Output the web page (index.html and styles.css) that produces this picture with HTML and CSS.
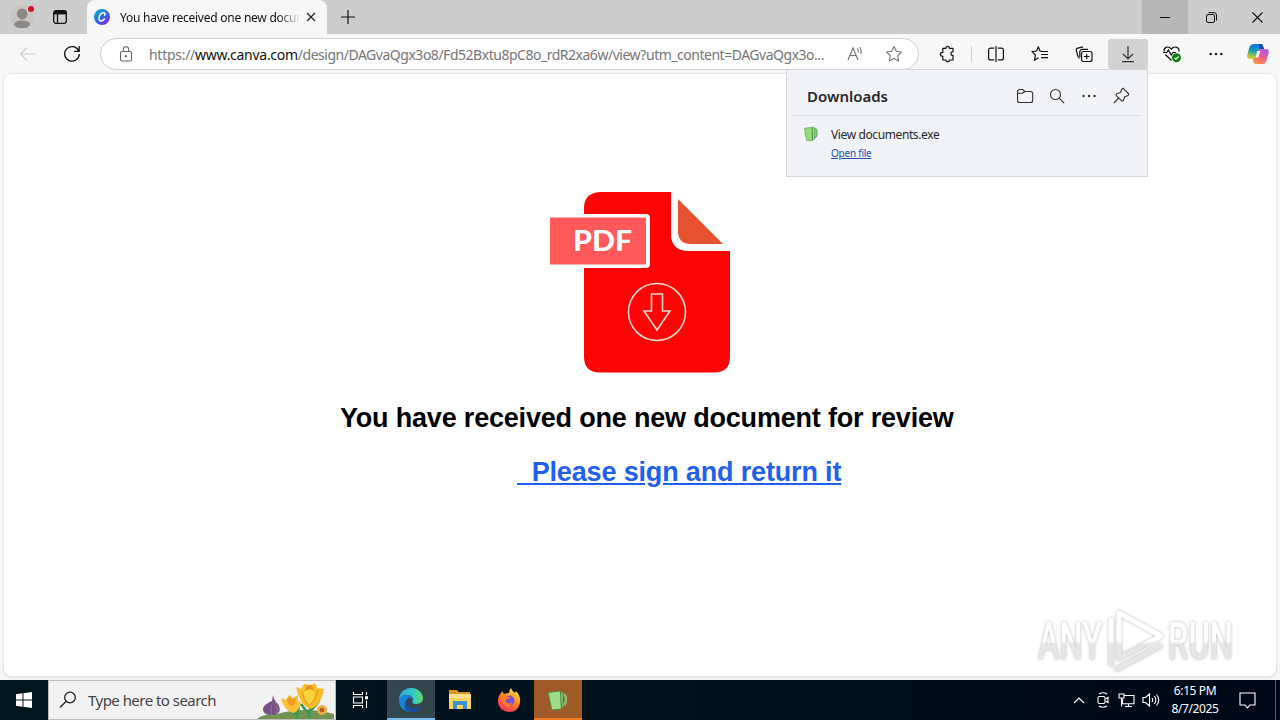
FILE: index.html
```html
<!DOCTYPE html>
<html lang="en">
<head>
<meta charset="utf-8">
<title>You have received one new document</title>
<link rel="stylesheet" href="styles.css">
</head>
<body>
<div class="desktop">
  <header class="tabstrip">
    <div class="profile"><svg width="28" height="28" viewBox="0 0 28 28"><circle cx="14" cy="14" r="12" fill="#c8c5c4"/><circle cx="14.200" cy="11" r="5.400" fill="#8c8886"/><path d="M6 22c0-3 3-4.500 8-4.500s8 1.500 8 4.500c-1.500 2.500-4.500 3-8 3s-6.500-.5-8-3z" fill="#8c8886"/><circle cx="23" cy="6" r="4.200" fill="#cfcccc"/><circle cx="23" cy="6" r="3" fill="#d3102a"/></svg></div>
    <div class="workspaces"><svg width="16" height="16" viewBox="0 0 16 16" fill="none" stroke="#111" stroke-width="1.300"><rect x="1.700" y="1.700" width="12.600" height="12.600" rx="2.200"/><path d="M2 3.700h12" stroke-width="3.400"/><path d="M5.500 5v9"/></svg></div>
    <div class="tab">
      <svg class="favicon" width="16" height="16" viewBox="0 0 16 16"><defs><linearGradient id="canva" x1="0" y1="0" x2=".75" y2="1"><stop offset="0" stop-color="#08b7c9"/><stop offset=".5" stop-color="#2877df"/><stop offset="1" stop-color="#762de1"/></linearGradient></defs><circle cx="8" cy="8" r="8" fill="url(#canva)"/><path d="M10.600 6.300c.8-1.300.2-2.500-1.100-2.500C7 3.800 5 6.600 5 9.300c0 3.600 3.300 3.500 5.500.7" fill="none" stroke="#fff" stroke-width="1.400" stroke-linecap="round"/></svg>
      <span class="tab-title">You have received one new docum</span>
      <svg class="tab-close" width="10" height="10" viewBox="0 0 10 10" stroke="#222" stroke-width="1.200"><path d="M1 1l8 8M9 1l-8 8"/></svg>
    </div>
    <svg class="new-tab" width="14" height="14" viewBox="0 0 14 14" stroke="#111" stroke-width="1.200"><path d="M7 0v14M0 7h14"/></svg>
    <div class="window-controls">
      <div class="control minimize"><svg width="10" height="10" viewBox="0 0 10 10" stroke="#111"><path d="M0 5.500h10"/></svg></div>
      <div class="control"><svg width="11" height="11" viewBox="0 0 11 11" fill="none" stroke="#111"><rect x=".5" y="2.500" width="8" height="8" rx="1.500"/><path d="M2.500 .6h5.500a2.500 2.500 0 0 1 2.500 2.500v5.400"/></svg></div>
      <div class="control"><svg width="11" height="11" viewBox="0 0 11 11" stroke="#111" stroke-width="1.100"><path d="M.5 .5l10 10M10.500 .5l-10 10"/></svg></div>
    </div>
  </header>

  <nav class="toolbar">
    <div class="nav-button"><svg width="18" height="16" viewBox="0 0 18 16" fill="none" stroke="#cfcfcf" stroke-width="1.200"><path d="M17 8H2M8 1.500L1.500 8 8 14.500"/></svg></div>
    <div class="nav-button"><svg width="18" height="18" viewBox="0 0 18 18" fill="none" stroke="#111" stroke-width="1.300"><path d="M15.800 6.200A7.300 7.300 0 1 0 16.300 9M16.200 1v5.300H11"/></svg></div>
    <div class="address">
      <svg width="14" height="16" viewBox="0 0 14 16" fill="none" stroke="#666" stroke-width="1.100"><rect x="1.500" y="5.500" width="11" height="9.500" rx="1.600"/><path d="M4.300 5.500V3.500a2.700 2.700 0 0 1 5.400 0v2"/><circle cx="7" cy="10.200" r=".6" fill="#666"/></svg>
      <span class="url"><span class="scheme">https://</span><b>www.canva.com</b><span class="path">/design/DAGvaQgx3o8/Fd52Bxtu8pC8o_rdR2xa6w/view?utm_content=DAGvaQgx3o...</span></span>
      <svg class="read-aloud" width="17" height="16" viewBox="0 0 17 16" fill="none" stroke="#707070" stroke-width="1.100"><path d="M1 14L6 2l5 12M2.800 9.500h6.400M10.300 2.400q1.500 2 .8 4.300M12.700 1q2.300 3.300 1.300 7"/></svg>
      <svg class="favorite" width="18" height="18" viewBox="0 0 18 18" fill="none" stroke="#777" stroke-width="1.100" stroke-linejoin="round"><path d="M9 1.500l2.300 4.800 5.200.7-3.800 3.700.9 5.200L9 13.400l-4.600 2.500.9-5.200L1.500 7l5.200-.7z"/></svg>
    </div>
    <div class="tool puzzle"><svg width="18" height="18" viewBox="0 0 18 18" fill="none" stroke="#111" stroke-width="1.200" stroke-linejoin="round"><path d="M5.800 3.300h2.200C7.800.8 11.600.8 11.400 3.300H15v3.500c-2.800-.5-2.800 4.100 0 3.600v4.600h-3.600c.2 2.200-3.600 2.200-3.400 0H4.800v-3.600C1.500 11.500 1.500 7.200 4.800 7.400V3.300z"/></svg></div>
    <div class="divider"></div>
    <div class="tool"><svg width="18" height="18" viewBox="0 0 18 18" fill="none" stroke="#111" stroke-width="1.200"><path d="M7.200 3.100H3.600a2 2 0 0 0-2 2v7.800a2 2 0 0 0 2 2h3.600M10.800 3.100h3.600a2 2 0 0 1 2 2v7.800a2 2 0 0 1-2 2h-3.600M9 1v16"/></svg></div>
    <div class="tool"><svg width="18" height="18" viewBox="0 0 18 18" fill="none" stroke="#111" stroke-width="1.200" stroke-linejoin="round"><path d="M12 6.500l-3-.4L7.300 1.800 5.500 6l-4.500.6L4.400 10l-.9 5.200 4-2.400M11.700 6.500H17M10 9.500h7M10 12.600h7"/></svg></div>
    <div class="tool"><svg width="18" height="18" viewBox="0 0 18 18" fill="none" stroke="#111" stroke-width="1.200"><rect x="6.500" y="6.500" width="10.500" height="10" rx="2"/><path d="M11.700 8.800v5.500M9 11.500h5.500M4.800 13.300A3 3 0 0 1 2.800 11L1.400 5.600a2 2 0 0 1 1.400-2.400L8 1.800M4.800 12V7a2.600 2.600 0 0 1 2.600-2.600H13"/></svg></div>
    <div class="tool download"><svg width="14" height="18" viewBox="0 0 14 18" fill="none" stroke="#333" stroke-width="1.200"><path d="M7 1v13M2 9l5 5 5-5M1 16.700h12"/></svg></div>
    <div class="tool"><svg width="20" height="18" viewBox="0 0 20 18" fill="none" stroke="#111" stroke-width="1.200"><path d="M2.300 6.500C1.300 2.500 6 .2 9.300 4c3.200-3.800 8.700-1.500 7.500 2.500M1.200 7.500h3.500l1.700-2.600L9.200 10l1.700-2.500h3M3.300 9.500l6.200 6"/><circle cx="14.500" cy="12.800" r="4.500" fill="#138018" stroke="none"/><path d="M12.500 13l1.400 1.300 2.700-2.800" stroke="#fff" stroke-width="1.100"/></svg></div>
    <div class="tool"><svg width="14" height="4" viewBox="0 0 14 4" fill="#222"><circle cx="1.700" cy="2" r="1.300"/><circle cx="7" cy="2" r="1.300"/><circle cx="12.300" cy="2" r="1.300"/></svg></div>
    <div class="tool copilot"><svg width="22" height="20" viewBox="0 0 22 20"><defs><linearGradient id="coolSide" x1=".5" y1="0" x2=".3" y2="1"><stop offset="0" stop-color="#126ee0"/><stop offset=".45" stop-color="#159cba"/><stop offset=".75" stop-color="#8bc255"/><stop offset="1" stop-color="#f4ce24"/></linearGradient><linearGradient id="warmSide" x1=".7" y1="0" x2=".3" y2="1"><stop offset="0" stop-color="#ac5fee"/><stop offset=".45" stop-color="#ee5694"/><stop offset="1" stop-color="#ff914c"/></linearGradient></defs><path d="M7 0h7q1.500 0 2 2l1 3h-3q-2 0-2.600 2L9 13q-1 3-3 2H3q-4 0-2.500-5l2-7Q3.400 0 7 0z" fill="url(#coolSide)"/><path d="M15 20H9q-2 0-2.500-2L6 15q2 0 2.800-2l2-6q.8-2 3-2h5q4 0 2.700 4.500l-2 7Q18.600 20 15 20z" fill="url(#warmSide)"/><path d="M10.300 7h3l-1.900 6.500h-3z" fill="#f7f7f7"/><path d="M12 0h2.500q1 .5 1.500 2l1 3h-5z" fill="#1849a8"/></svg></div>
  </nav>

  <section class="downloads">
    <div class="downloads-head">
      <h2>Downloads</h2>
      <svg class="folder" width="18" height="16" viewBox="0 0 18 16" fill="none" stroke="#333" stroke-width="1.100"><path d="M1.500 12.500v-9a2 2 0 0 1 2-2h3.200l2 2h6a2 2 0 0 1 2 2v7a2 2 0 0 1-2 2H3.500a2 2 0 0 1-2-2zM1.500 5.200h5.200l2-1.700"/></svg>
      <svg width="16" height="16" viewBox="0 0 16 16" fill="none" stroke="#333" stroke-width="1.100"><circle cx="6.500" cy="6.500" r="5"/><path d="M10.200 10.200l5 5"/></svg>
      <svg width="14" height="16" viewBox="0 0 14 16" fill="#333"><circle cx="1.500" cy="8" r="1.200"/><circle cx="7" cy="8" r="1.200"/><circle cx="12.500" cy="8" r="1.200"/></svg>
      <svg width="17" height="17" viewBox="0 0 17 17" fill="none" stroke="#333" stroke-width="1.100" stroke-linejoin="round"><path d="M10 1.200l5.800 5.800-.8 1.500-3.300 1.300-1.500 4-1.200.4L3 8.300l.4-1.300 4-1.500L9 2zM5.700 11L1 16"/></svg>
    </div>
    <div class="download-item">
      <svg width="14" height="16" viewBox="0 0 14 16"><path d="M9.500 2q4 0 3.500 4v4q-1.500 3.500-5 3" fill="#86c87d" stroke="#69a05e"/><path d="M.7 2.300l7-.8L9 .8l1.500 2v9.500L9 14.200l-6 .6L1.500 9z" fill="#91df79" stroke="#76b36a"/><path d="M8 2l.5 12" fill="none" stroke="#4f8a47"/></svg>
      <div class="file"><span class="file-name">View documents.exe</span><a class="open-file">Open file</a></div>
    </div>
  </section>

  <main class="viewport">
    <div class="page">
      <svg class="pdf" width="182" height="182" viewBox="0 0 182 182">
        <path d="M53 1h69v42q0 17 18 17h41v105.500q0 16-16 16H51q-16 0-16-16V17Q35 1 53 1z" fill="#fc0505"/>
        <path d="M129 8l45 45h-32q-13 0-13-13z" fill="#e6522e"/>
        <path d="M0 23h97q4 0 4 4v46q0 4-4 4H0z" fill="#fff"/><path d="M1 26.500h96v47H1z" fill="#ff5959"/>
        <text class="pdf-label" x="24" y="60" textLength="59" lengthAdjust="spacingAndGlyphs">PDF</text>
        <g fill="none" stroke="#ffd5cd" stroke-width="1.600"><circle cx="108" cy="121" r="28.500"/><path d="M102.500 103h11v17h7.500l-13 19-13-19h7.500z"/></g>
      </svg>
      <h1 class="heading">You have received one new document for review</h1>
      <a class="sign-link">&nbsp;&nbsp;Please sign and return it</a>
      <div class="watermark">
        <svg width="210" height="72" viewBox="0 0 210 72">
          <defs><linearGradient id="mark" gradientUnits="userSpaceOnUse" x1="0" y1="14" x2="0" y2="58"><stop offset=".5" stop-color="#fff"/><stop offset=".58" stop-color="#e6e6e6"/></linearGradient></defs>
          <g class="brand" fill="url(#mark)"><text x="4" y="54" textLength="64" lengthAdjust="spacingAndGlyphs">ANY</text><text x="134" y="54" textLength="65" lengthAdjust="spacingAndGlyphs">RUN</text></g>
          <g fill="none" stroke="url(#mark)" stroke-width="5" stroke-linejoin="round" stroke-linecap="round"><path d="M85 53V8l42 23-42 22M77 15v44M83 64l43-23"/></g>
        </svg>
      </div>
    </div>
  </main>

  <footer class="taskbar">
    <div class="start"><svg width="16" height="16" viewBox="0 0 16 16" fill="#fff"><path d="M0 2.200l6.500-.9v6.200H0zM7.500 1.200L16 0v7.500H7.500zM0 8.500h6.500v6.200L0 13.800zM7.500 8.500H16V16l-8.500-1.200z"/></svg></div>
    <div class="search">
      <svg width="18" height="18" viewBox="0 0 18 18" fill="none" stroke="#222" stroke-width="1.300"><circle cx="11" cy="6.500" r="5.300"/><path d="M7.200 10.300L1 16.500"/></svg>
      <span>Type here to search</span>
      <svg class="flowers" width="79" height="37" viewBox="0 0 79 37"><path d="M1 37q5-5 20-5 28-8 57 0v5z" fill="#719451"/><path d="M41 37q0-7 2-12M53 36q1-9 1-16M54 29q5-4 9-10M41 33q-6-3-9-7M53 31q-5-4-8-9" fill="none" stroke="#409654" stroke-width="2.500"/><path d="M17 13q1 6 5 9 5 9-4 11-12 1-11-7 2-4 9-7z" fill="#765087"/><path d="M17 20q-4 8-1 13M19 20q4 7 1 13" fill="none" stroke="#9d75aa" stroke-width=".8"/><path d="M25 16l5 2 3-5 4 3 5-3v6l3 1q-2 10-8 11-9-2-12-15z" fill="#fac233"/><path d="M31 17l3-3 2 3 4-1-1 6-3 2-4-2z" fill="#f19a20"/><path d="M40 5l5 2 3-5 7 1 4-2 2 5 7 1q-3 17-14 20-10-4-14-22z" fill="#fabb26"/><path d="M47 6l7-3 5 5-1 10-4 6-5-6z" fill="#ffd33a"/><path d="M48 9l3-5 4-1 4 6-5-2z" fill="#e98d24"/><path d="M46 9q1 8 7 15M62 8q-1 8-8 15" fill="none" stroke="#dc9417"/><circle cx="66" cy="28" r="5" fill="#f2ae46"/><circle cx="66" cy="28" r="2.300" fill="#b8572c"/></svg>
    </div>
    <div class="task view"><svg width="17" height="16" viewBox="0 0 17 16" fill="none" stroke="#fff" stroke-width="1.100"><path d="M1.500 0v2.500h9V0M1.500 5h9v6h-9zM1.500 16v-2.500h9V16M14.500 0v3M14.500 8.500V16"/><path d="M13 4.200h3v3h-3z" fill="#fff" stroke="none"/></svg></div>
    <div class="task edge"><svg width="24" height="24" viewBox="0 0 24 24"><defs><linearGradient id="edgeTop"><stop stop-color="#27a9df"/><stop offset=".6" stop-color="#35c8c4"/><stop offset="1" stop-color="#61dc63"/></linearGradient></defs><path d="M0 12C0-3 22-4 24 10q0 6-8 6-4 0-2-4 0-5-6-5-5 0-8 5z" fill="url(#edgeTop)"/><path d="M0 12q1-5 8-5 6 0 6 5-2-3-5-2-5 5 0 10 4 4 10 2-6 4-12 1Q0 20 0 12z" fill="#1685d9"/><path d="M8 11q-3 8 5 9 6 1 9-2-4 8-11 6Q2 22 8 11z" fill="#154f9c"/></svg></div>
    <div class="task"><svg width="22" height="20" viewBox="0 0 22 20"><path d="M0 0h8l1.500 2H21v5H0z" fill="#dc971c"/><path d="M0 4h22v15H0z" fill="#ffd45d"/><path d="M4 19v-8h14v8h-4v-4H8v4z" fill="#3b94d1"/><path d="M0 4h22v4H0z" fill="#ffe28b"/></svg></div>
    <div class="task"><svg width="24" height="24" viewBox="0 0 24 24"><defs><linearGradient id="flame" x1=".8" y1="0" x2=".2" y2="1"><stop stop-color="#ffe348"/><stop offset=".45" stop-color="#ff8a22"/><stop offset="1" stop-color="#f32768"/></linearGradient></defs><path d="M5 3l2 3q3-1 5-1 0-3 2-5 1 3 4 5l1-2q5 5 4 12-2 9-11 9Q1 23 1 13q0-5 3-8z" fill="url(#flame)"/><circle cx="12.500" cy="12.500" r="5" fill="#7650d8"/><path d="M4 8q4-2 7 1h3q-1 2-4 2-2 1-1 3 3 3 6 0-1 5-6 4-5-3-5-10z" fill="#ff7c22"/></svg></div>
    <div class="task running"><svg width="22" height="22" viewBox="0 0 22 22"><path d="M14 5q5 0 5 5 0 7-6 7" fill="none" stroke="#83bd72" stroke-width="2.500"/><path d="M1 3.500l12-1.500 3 2v14l-2 2-9 1L3 13z" fill="#9bdc88" stroke="#4f8b43"/><path d="M13.500 3l1 16" fill="none" stroke="#4f8b43" stroke-width="1.200"/></svg></div>
    <div class="tray">
      <svg width="12" height="8" viewBox="0 0 12 8" fill="none" stroke="#fff" stroke-width="1.200"><path d="M1 7l5-5 5 5"/></svg>
      <svg width="12" height="16" viewBox="0 0 12 16" fill="none" stroke="#fff" stroke-width="1.100"><rect x="1" y="4.500" width="7" height="7" rx="1.500"/><path d="M8.500 7l2.500-1.700v5.400L8.500 9M2 2q4-2.500 8 0M2 14q4 2.500 8 0"/></svg>
      <svg width="17" height="16" viewBox="0 0 17 16" fill="none" stroke="#fff" stroke-width="1.100"><path d="M6.500 3.500H16v8.300H4.500V7M10.500 12v2.500M7 14.500h7M1 2h5v4H1zM3.500 6v8.500"/></svg>
      <svg width="18" height="16" viewBox="0 0 18 16" fill="none" stroke="#fff" stroke-width="1.100"><path d="M1 5.500h2.500l4-3.500v12l-4-3.500H1zM10 6q1.500 2 0 4M12.300 4q3 4 0 8M14.500 2.500q4.500 5.500 0 11"/></svg>
      <div class="clock"><span class="time">6:15 PM</span><span class="date">8/7/2025</span></div>
      <svg width="17" height="17" viewBox="0 0 17 17" fill="none" stroke="#fff" stroke-width="1.100"><path d="M1 1h15v12h-5l-2.500 2.800L6 13H1z"/></svg>
      <div class="show-desktop"></div>
    </div>
  </footer>
</div>
</body>
</html>
```

FILE: styles.css
```css
* { box-sizing: border-box; }
body { margin: 0; font-family: "Noto Sans", "Open Sans", sans-serif; }
svg { display: block; flex: none; }
.desktop { position: relative; width: 1280px; height: 720px; display: flex; flex-direction: column; overflow: hidden; background: #f7f7f7; }

.tabstrip { height: 34px; flex: none; display: flex; align-items: center; background: #cdcdcd; }
.profile { width: 46px; padding: 0 0 1px 8px; }
.workspaces { width: 41px; padding-left: 6px; }
.tab { width: 240px; height: 34px; display: flex; align-items: center; padding-left: 7px; background: #f7f7f7; border-radius: 8px 8px 0 0; }
.tab-title { width: 188px; margin-left: 10px; font-size: 12px; letter-spacing: -.24px; white-space: nowrap; color: #111; mask-image: linear-gradient(to right, #000 158px, transparent 181px); }
.tab-close { margin-left: -2px; }
.new-tab { margin-left: 14px; }
.window-controls { margin-left: auto; display: flex; height: 34px; }
.control { width: 46px; display: flex; align-items: center; justify-content: center; }
.minimize { background: #b7b7b7; }

.toolbar { height: 39px; flex: none; display: flex; align-items: center; padding: 1px 0 0 6px; }
.nav-button { width: 44px; display: flex; justify-content: center; }
.address { width: 819px; height: 32px; margin-left: 6px; padding-left: 18px; display: flex; align-items: center; background: #fff; border: 1px solid #d0d0d0; border-radius: 16px; }
.url { width: 690px; margin-left: 16px; font-size: 14px; white-space: nowrap; color: #767676; }
.scheme { letter-spacing: -.28px; }
.url b { font-weight: 400; letter-spacing: -.28px; color: #111; }
.path { letter-spacing: -.48px; }
.read-aloud { margin-left: 8px; }
.favorite { margin-left: 21px; }
.tool { width: 44px; height: 30px; display: flex; align-items: center; justify-content: center; }
.puzzle { margin-left: 6px; }
.divider { width: 1px; height: 16px; margin: 0 1px 0 2px; background: #d0d0d0; }
.divider + .tool { margin-left: 1px; }
.download { width: 40px; margin: 0 2px; background: #d2d2d2; border-radius: 3px; }
.copilot { width: 40px; }

.downloads { position: absolute; z-index: 2; left: 786px; top: 69px; width: 362px; height: 108px; padding: 0 5px; background: #f1f3f8; border: 1px solid #d3d5da; color: #292929; }
.downloads-head { height: 46px; padding: 6px 12px 0 15px; display: flex; align-items: center; gap: 17px; border-bottom: 1px solid #e0e3e9; }
.downloads-head h2 { margin: 0 auto 0 0; font-size: 15px; font-weight: 600; letter-spacing: 0; }
.folder { margin-right: -2px; }
.download-item { display: flex; padding: 10px 0 0 12px; gap: 13px; }
.file { display: flex; flex-direction: column; }
.file-name { font-size: 12px; line-height: 17px; letter-spacing: -.39px; }
.open-file { margin-top: 3px; font-size: 10px; line-height: 14px; letter-spacing: -.24px; color: #2450b2; text-decoration: underline; }

.viewport { height: 607px; flex: none; padding: 1px 4px 4px; background: #f5f6f8; }
.page { position: relative; height: 602px; display: flex; flex-direction: column; background: #fff; border-radius: 8px; box-shadow: 0 0 0 1px #e4e5e6, 0 1px 3px #ccc; }
.pdf { margin: 117px 0 0 545px; }
.pdf-label { font: 900 29px Lato, sans-serif; fill: #fff; }
.heading { margin: 30px 0 0 336px; font: 700 27px/30px "Liberation Sans", sans-serif; letter-spacing: -.19px; color: #000; white-space: nowrap; }
.sign-link { align-self: flex-start; margin: 24px 0 0 513px; font: 700 27px/30px "Liberation Sans", sans-serif; letter-spacing: -.16px; color: #1f60ee; text-decoration: underline; white-space: nowrap; }
.watermark { position: absolute; left: 1030px; top: 531px; filter: drop-shadow(0 0 1.5px #b4b4b4); }
.brand { font: 500 52px Roboto, sans-serif; }

.taskbar { height: 40px; flex: none; display: flex; background: linear-gradient(to right, #00171f, #001019 60%, #000817); color: #fff; }
.start { width: 48px; display: flex; align-items: center; justify-content: center; }
.search { width: 288px; display: flex; align-items: center; padding-left: 10px; border: 1px solid #bdbdbd; background: #f2f2f2; color: #444; font-size: 15px; }
.search span { margin-left: 11px; letter-spacing: -.53px; white-space: nowrap; }
.flowers { margin-left: auto; align-self: flex-end; }
.task { width: 49px; display: flex; align-items: center; justify-content: center; }
.view { width: 48px; }
.edge { margin-left: 3px; width: 48px; background: #33464d; border-bottom: 2px solid #76b9ed; padding-top: 2px; }
.running { margin-left: 1px; width: 48px; background: #a05a27; border-bottom: 2px solid #f47b20; padding-top: 2px; }
.tray { margin-left: auto; display: flex; align-items: center; }
.tray svg + svg { margin-left: 12px; }
.tray svg + svg + svg { margin-left: 9px; }
.tray svg + svg + svg + svg { margin-left: 7px; }
.clock { width: 70px; display: flex; flex-direction: column; align-items: center; font-size: 12px; line-height: 18px; letter-spacing: -.4px; }
.clock + svg { margin-left: 9px; }
.show-desktop { width: 5px; height: 40px; margin-left: 19px; border-left: 1px solid #55606a; }
```
